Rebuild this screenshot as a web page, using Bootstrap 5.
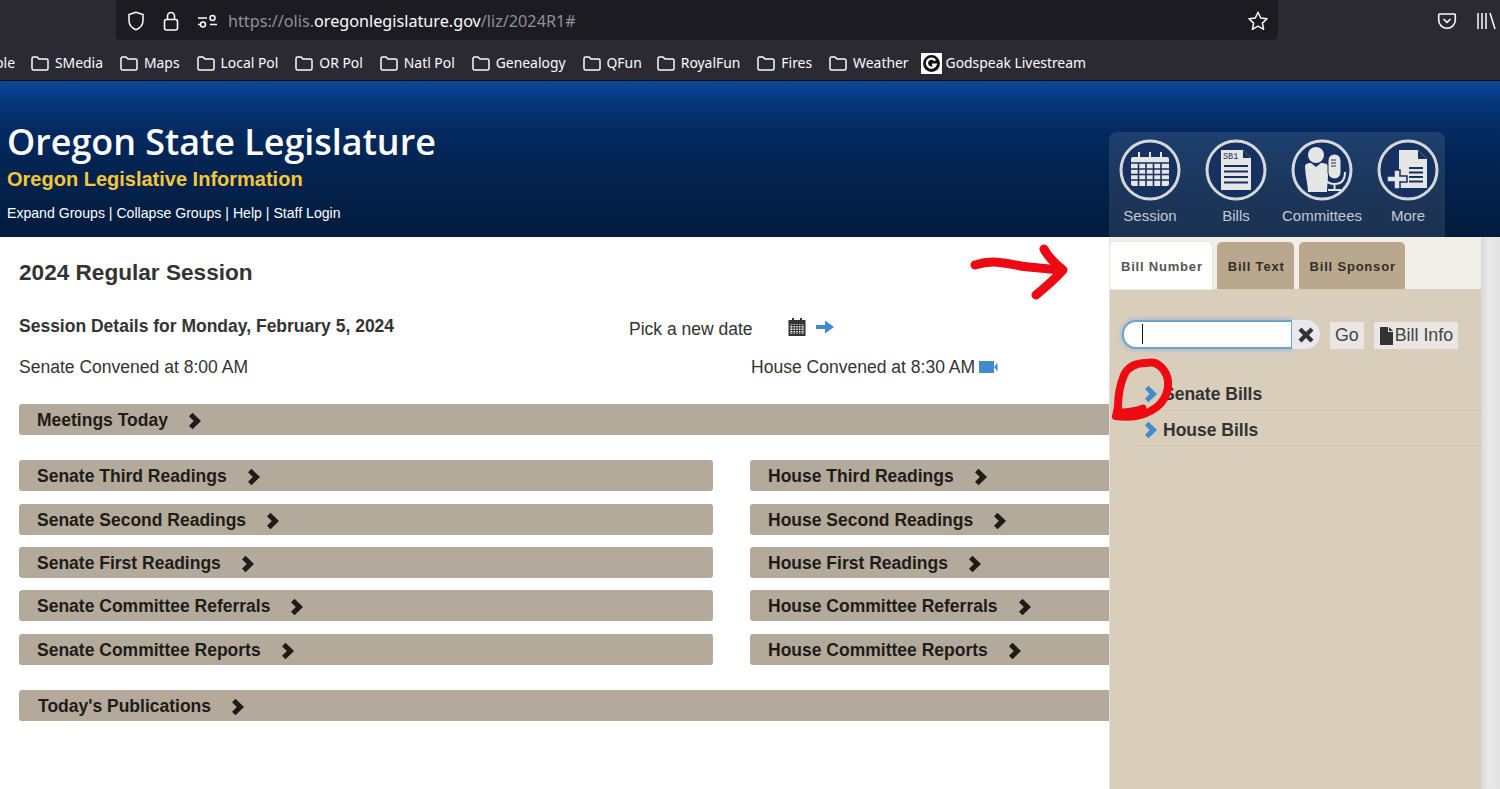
<!DOCTYPE html>
<html lang="en">
<head>
<meta charset="utf-8">
<title>Oregon State Legislature</title>
<link href="https://cdn.jsdelivr.net/npm/bootstrap@5.3.0/dist/css/bootstrap.min.css" rel="stylesheet">
<style>
html,body{height:789px;overflow:hidden;background:#fff}
body{font-family:"Liberation Sans",Arial,sans-serif;color:#333;position:relative}
.chrome{background:#2b2a33;height:81px;border-bottom:1px solid #0c0c0d;font-family:"Noto Sans",sans-serif;color:#fbfbfe;overflow:hidden}
.toolbar{height:42px;padding-left:116px}
.urlbar{width:1162px;height:40px;background:#1c1b22;border-radius:0 0 5px 5px;padding:2px 9px 0 9px}
.urlbar svg{flex:none}
.shield-gap{margin-left:12px}
.urltext{font-size:16.2px;color:#8f8f9d;margin-left:9px;white-space:nowrap}
.urltext b{font-weight:400;color:#fbfbfe}
.star{margin-left:auto}
.tools{margin-left:159px;gap:19px}
.marks{height:39px;padding-top:3px;font-size:13.9px;margin-left:-5px}
.mk{gap:5px;margin-right:16px;white-space:nowrap}
.mk.first-cut{margin-right:15px}
.mk.tight{margin-right:14px}
.mk.tighter{margin-right:12px}
.mk.fav{gap:4px}
.gfav{width:21px;height:21px;background:#fff;flex:none}
.site-head{height:156px;background:linear-gradient(#09499b 0,#06367a 22px,#042a62 48px,#03234f 90px,#021b3d 156px);padding:0 0 0 7px;position:relative;color:#fff}
.site-title{font-family:"Open Sans",sans-serif;font-weight:600;font-size:35.9px;line-height:44px;padding-top:39px;margin:0;box-sizing:content-box;height:44px}
.site-sub{font-weight:700;font-size:20px;color:#f4c63c;line-height:24px;margin-top:3px}
.site-links{font-size:14.1px;line-height:20px;margin-top:12px}
.site-links a{color:#fff;text-decoration:none}
.quick{position:absolute;left:1109px;top:51px;width:336px;height:105px;background:rgba(255,255,255,.1);border-radius:8px 8px 0 0;padding-top:7px}
.qitem{width:86px;flex:none;text-align:center;color:#c3c9d2;font-size:15px;line-height:18px;white-space:nowrap}
.qitem svg{display:block;margin:0 auto 6px}
.qrow{margin-left:-2px}
.work{height:552px;overflow:hidden}
.leftcol{width:1109px;flex:none;overflow:hidden;padding-left:19px}
.page-h{font-size:22.6px;font-weight:700;line-height:26px;margin:23px 0 0}
.detail{margin-top:27px;height:26px}
.detail-h{font-size:17.5px;font-weight:700;line-height:22px;width:610px;flex:none}
.picker{font-size:17.5px;white-space:nowrap;padding-top:3px}
.picker span{width:159px;flex:none;padding-top:4px}
.picker svg{margin-top:-2px}
.picker .arrow-x{margin-left:9px}
.conv{font-size:17.55px;line-height:24px;margin-top:16px}
.conv>div:first-child{width:732px;flex:none}
.bar-x{height:31px;background:#b3aa9c;border-radius:3px;font-size:17.5px;font-weight:700;color:#1f1c17;padding:2px 0 0 18px;white-space:nowrap;gap:20px}
.bar-x.wide{width:1200px}
.bar-x.pub{padding-left:19px}
.two{display:grid;grid-template-columns:694px 694px;grid-template-rows:44px 43px 43px 44px 31px;column-gap:37px;margin:25px 0}
.meet{margin-top:25px}
.sidebar{width:372px;flex:none;background:#d9cdbc;border-left:1px solid #e6e2da;position:relative}
.tabs-x{background:#f1eee8;height:52px;padding:5px 0 0 0;gap:5px;margin:0;flex-wrap:nowrap;border:0}
.tabs-x .nav-link{height:47px;border:0;border-radius:5px 5px 0 0;background:#b9a88e;color:#332e27;font-weight:700;font-size:13px;letter-spacing:.8px;line-height:49px;padding:0 9px 0 11px;margin:0}
.tabs-x .nav-link.active{background:#fff;color:#555;box-shadow:0 0 0 1px #ebe8e2}
.search-row{margin:31px 0 0 12px;height:29px}
.qfield{width:170px;height:29px;border:2px solid #6ea2cf;border-right-width:1px;border-radius:14px 0 0 14px;background:#fff;box-shadow:0 0 5px rgba(82,168,236,.6);padding:2px 0 0 18px;flex:none}
.caret-x{display:block;width:1px;height:20px;background:#111}
.qclear{width:28px;height:29px;background:#e8e8ee;border-radius:0 15px 15px 0;flex:none}
.btn-x{height:27px;padding:0 5px;line-height:27px;font-size:17.8px;color:#444;background:#e9e6e4;border:0;border-radius:0;margin:2px 0 0 10px;--bs-btn-hover-bg:#e9e6e4}
.tree{margin:26px 0 0 27px;background:transparent;border-radius:0}
.tree .list-group-item{background:transparent;border:0;border-bottom:1px dotted #cabfae;border-radius:0;height:35.5px;padding:4px 0 0 7px;font-size:17.5px;font-weight:700;color:#333;gap:5px}
.sbar{width:19px;flex:none;background:linear-gradient(90deg,#d9d9d9,#e8e8e8 40%,#e3e3e3)}
.ink{position:absolute;left:0;top:0;pointer-events:none}
</style>
</head>
<body>
<div class="chrome">
  <div class="toolbar d-flex">
    <div class="urlbar d-flex align-items-center">
      <svg width="22" height="22" viewBox="0 0 22 22" fill="none" stroke="#fbfbfe" stroke-width="1.5"><path d="M11 2.200 4 4.600v6c0 4.600 3.400 7.800 7 9.200 3.600-1.400 7-4.600 7-9.200v-6z"/></svg>
      <svg class="shield-gap" width="24" height="22" viewBox="0 0 24 22" fill="none" stroke="#fbfbfe" stroke-width="1.6"><rect x="5.500" y="9.500" width="13" height="10.500" rx="2"/><path d="M8.500 9.500V6a3.500 3.500 0 0 1 7 0v3.500"/></svg>
      <svg class="shield-gap" width="24" height="18" viewBox="0 0 24 18" fill="none" stroke="#fbfbfe" stroke-width="1.500"><path d="M3 6h9M3 12.500h2M15 12.500h7"/><circle cx="17.500" cy="6" r="2.500"/><circle cx="8" cy="12.500" r="2.500"/></svg>
      <span class="urltext">https://olis.<b>oregonlegislature.gov</b>/liz/2024R1#</span>
      <svg class="star" width="22" height="22" viewBox="0 0 22 22" fill="none" stroke="#fbfbfe" stroke-width="1.5" stroke-linejoin="round"><path d="m11 2.200 2.700 5.800 6.300.8-4.600 4.300 1.200 6.200L11 16.200l-5.600 3.100 1.200-6.200L2 8.800l6.300-.8z"/></svg>
    </div>
    <div class="tools d-flex align-items-center">
      <svg width="20" height="20" viewBox="0 0 20 20" fill="none" stroke="#fbfbfe" stroke-width="1.6"><path d="M2.500 3h15a.8.8 0 0 1 .8.8V9a8.300 8.300 0 0 1-16.600 0V3.800a.8.8 0 0 1 .8-.8z"/><path d="m6.500 8 3.500 3.400L13.500 8"/></svg>
      <svg width="20" height="22" viewBox="0 0 20 22" fill="none" stroke="#fbfbfe" stroke-width="1.500"><path d="M2 3v16M6 3v16M10 3v16M14 3l5 16"/></svg>
    </div>
  </div>
  <div class="marks d-flex align-items-center">
    <span class="mk first-cut">ple</span>
    <span class="mk d-flex align-items-center"><svg width="20" height="18" viewBox="0 0 20 18" fill="none" stroke="#fbfbfe" stroke-width="1.500"><path d="M2 4.500A1.500 1.500 0 0 1 3.500 3H7l2 2h7.500A1.500 1.500 0 0 1 18 6.500v8a1.500 1.500 0 0 1-1.500 1.500h-13A1.500 1.500 0 0 1 2 14.500z"/></svg>SMedia</span>
    <span class="mk d-flex align-items-center"><svg width="20" height="18" viewBox="0 0 20 18" fill="none" stroke="#fbfbfe" stroke-width="1.500"><path d="M2 4.500A1.500 1.500 0 0 1 3.500 3H7l2 2h7.500A1.500 1.500 0 0 1 18 6.500v8a1.500 1.500 0 0 1-1.500 1.500h-13A1.500 1.500 0 0 1 2 14.500z"/></svg>Maps</span>
    <span class="mk d-flex align-items-center"><svg width="20" height="18" viewBox="0 0 20 18" fill="none" stroke="#fbfbfe" stroke-width="1.500"><path d="M2 4.500A1.500 1.500 0 0 1 3.500 3H7l2 2h7.500A1.500 1.500 0 0 1 18 6.500v8a1.500 1.500 0 0 1-1.500 1.500h-13A1.500 1.500 0 0 1 2 14.500z"/></svg>Local Pol</span>
    <span class="mk d-flex align-items-center"><svg width="20" height="18" viewBox="0 0 20 18" fill="none" stroke="#fbfbfe" stroke-width="1.500"><path d="M2 4.500A1.500 1.500 0 0 1 3.500 3H7l2 2h7.500A1.500 1.500 0 0 1 18 6.500v8a1.500 1.500 0 0 1-1.500 1.500h-13A1.500 1.500 0 0 1 2 14.500z"/></svg>OR Pol</span>
    <span class="mk d-flex align-items-center"><svg width="20" height="18" viewBox="0 0 20 18" fill="none" stroke="#fbfbfe" stroke-width="1.500"><path d="M2 4.500A1.500 1.500 0 0 1 3.500 3H7l2 2h7.500A1.500 1.500 0 0 1 18 6.500v8a1.500 1.500 0 0 1-1.500 1.500h-13A1.500 1.500 0 0 1 2 14.500z"/></svg>Natl Pol</span>
    <span class="mk d-flex align-items-center"><svg width="20" height="18" viewBox="0 0 20 18" fill="none" stroke="#fbfbfe" stroke-width="1.500"><path d="M2 4.500A1.500 1.500 0 0 1 3.500 3H7l2 2h7.500A1.500 1.500 0 0 1 18 6.500v8a1.500 1.500 0 0 1-1.500 1.500h-13A1.500 1.500 0 0 1 2 14.500z"/></svg>Genealogy</span>
    <span class="mk tight d-flex align-items-center"><svg width="20" height="18" viewBox="0 0 20 18" fill="none" stroke="#fbfbfe" stroke-width="1.500"><path d="M2 4.500A1.500 1.500 0 0 1 3.500 3H7l2 2h7.500A1.500 1.500 0 0 1 18 6.500v8a1.500 1.500 0 0 1-1.500 1.500h-13A1.500 1.500 0 0 1 2 14.500z"/></svg>QFun</span>
    <span class="mk d-flex align-items-center"><svg width="20" height="18" viewBox="0 0 20 18" fill="none" stroke="#fbfbfe" stroke-width="1.500"><path d="M2 4.500A1.500 1.500 0 0 1 3.500 3H7l2 2h7.500A1.500 1.500 0 0 1 18 6.500v8a1.500 1.500 0 0 1-1.500 1.500h-13A1.500 1.500 0 0 1 2 14.500z"/></svg>RoyalFun</span>
    <span class="mk d-flex align-items-center"><svg width="20" height="18" viewBox="0 0 20 18" fill="none" stroke="#fbfbfe" stroke-width="1.500"><path d="M2 4.500A1.500 1.500 0 0 1 3.500 3H7l2 2h7.500A1.500 1.500 0 0 1 18 6.500v8a1.500 1.500 0 0 1-1.500 1.500h-13A1.500 1.500 0 0 1 2 14.500z"/></svg>Fires</span>
    <span class="mk tighter d-flex align-items-center"><svg width="20" height="18" viewBox="0 0 20 18" fill="none" stroke="#fbfbfe" stroke-width="1.500"><path d="M2 4.500A1.500 1.500 0 0 1 3.500 3H7l2 2h7.500A1.500 1.500 0 0 1 18 6.500v8a1.500 1.500 0 0 1-1.500 1.500h-13A1.500 1.500 0 0 1 2 14.500z"/></svg>Weather</span>
    <span class="mk fav d-flex align-items-center"><svg class="gfav" viewBox="0 0 20 20"><circle cx="10" cy="10" r="8" fill="#111"/><path d="M13.500 7.200A4.300 4.300 0 1 0 14 11h-3.500" fill="none" stroke="#fff" stroke-width="2.200"/></svg>Godspeak Livestream</span>
  </div>
</div>

<header class="site-head">
  <h1 class="site-title">Oregon State Legislature</h1>
  <div class="site-sub">Oregon Legislative Information</div>
  <div class="site-links"><a href="#">Expand Groups</a> | <a href="#">Collapse Groups</a> | <a href="#">Help</a> | <a href="#">Staff Login</a></div>
  <nav class="quick">
    <div class="qrow d-flex">
      <div class="qitem"><svg width="62" height="62" viewBox="0 0 62 62"><circle cx="31" cy="31" r="29" fill="#16315f" stroke="#d5d7da" stroke-width="3"/><rect x="12" y="18" width="38" height="29" rx="2" fill="#e6e6e6"/><g stroke="#16315f" stroke-width="1.600"><path d="M12 24h38M12 30h38M12 35.500h38M12 41h38M19.500 24v23M27 24v23M34.500 24v23M42 24v23"/></g><g stroke="#e6e6e6" stroke-width="2"><path d="M20 13v7M31 13v7M42 13v7"/></g></svg>Session</div>
      <div class="qitem"><svg width="62" height="62" viewBox="0 0 62 62"><circle cx="31" cy="31" r="29" fill="#16315f" stroke="#d5d7da" stroke-width="3"/><path d="M16 11h22l8 8v32H16z" fill="#e6e6e6"/><path d="M38 11v8h8z" fill="#16315f"/><text x="18" y="20" font-size="8.500" font-family="Liberation Mono,monospace" fill="#16315f">SB1</text><path d="M19 27h24M19 32.500h24M19 38h24M19 43.500h24" stroke="#16315f" stroke-width="2"/></svg>Bills</div>
      <div class="qitem"><svg width="62" height="62" viewBox="0 0 62 62"><circle cx="31" cy="31" r="29" fill="#16315f" stroke="#d5d7da" stroke-width="3"/><circle cx="25" cy="16" r="8" fill="#e6e6e6"/><path d="M14 28c0-3 2-4 6-4l5 4 5-4c4 0 7 1 7 3v8c0 7-1 12-1 18H17c0-8-3-15-3-29z" fill="#e6e6e6"/><rect x="37" y="15" width="13" height="25" rx="6.500" fill="#e6e6e6" stroke="#16315f"/><path d="M40 21h5M40 24h5M40 27h5" stroke="#16315f"/><path d="M33 33c0 9 5 12 10.500 12S54 42 54 33M43.500 45v5M37 51h13" fill="none" stroke="#e6e6e6" stroke-width="2"/></svg>Committees</div>
      <div class="qitem"><svg width="62" height="62" viewBox="0 0 62 62"><circle cx="31" cy="31" r="29" fill="#16315f" stroke="#d5d7da" stroke-width="3"/><path d="M22 11h19l9 9v29H22z" fill="#e6e6e6"/><path d="M41 11v9h9z" fill="#16315f"/><path d="M10 37h7v-6h6v6h7v6h-7v7h-6v-7h-7z" fill="#e6e6e6" stroke="#16315f" stroke-width="1.500"/><path d="M32 29h14M32 33.500h14M32 38h14M32 42.500h14" stroke="#16315f" stroke-width="2"/></svg>More</div>
    </div>
  </nav>
</header>

<main class="work d-flex">
  <div class="leftcol">
    <h2 class="page-h">2024 Regular Session</h2>
    <div class="detail d-flex align-items-center">
      <div class="detail-h">Session Details for Monday, February 5, 2024</div>
      <div class="picker d-flex align-items-center"><span>Pick a new date</span>
        <svg width="18" height="19" viewBox="0 0 18 19"><path d="M.5 3h3.500V1h2v2h6V1h2v2h3.500v16H.5z" fill="#333"/><path d="M2.500 7.500h13v9.500h-13z" fill="#fff"/><path d="M2.500 8.500h13M2.500 11h13M2.500 13.500h13M2.500 16h13M5 7.500V17M7.700 7.500V17M10.300 7.500V17M13 7.500V17" stroke="#333" stroke-width="1.200"/></svg>
        <svg class="arrow-x" width="20" height="18" viewBox="0 0 20 18"><path d="M1 7h9V2.500L19 9l-9 6.500V11H1z" fill="#428bca"/></svg>
      </div>
    </div>
    <div class="conv d-flex">
      <div>Senate Convened at 8:00 AM</div>
      <div class="d-flex align-items-center">House Convened at 8:30 AM<svg class="ms-1" width="19" height="14" viewBox="0 0 19 14"><rect x="0" y="1" width="15" height="12" fill="#428bca"/><path d="M15 7l3.500-4.500v9z" fill="#428bca"/></svg></div>
    </div>
    <div class="bar-x wide meet d-flex align-items-center">Meetings Today<svg class="chev" width="14" height="18" viewBox="0 0 14 18"><path d="M4.500.8 13 9l-8.500 8.200L1 13.700 5.800 9 1 4.300z" fill="#1f1c17"/></svg></div>
    <div class="two">
      <div class="bar-x d-flex align-items-center">Senate Third Readings<svg width="14" height="18" viewBox="0 0 14 18"><path d="M4.500.8 13 9l-8.500 8.200L1 13.700 5.800 9 1 4.300z" fill="#1f1c17"/></svg></div>
      <div class="bar-x d-flex align-items-center">House Third Readings<svg width="14" height="18" viewBox="0 0 14 18"><path d="M4.500.8 13 9l-8.500 8.200L1 13.700 5.800 9 1 4.300z" fill="#1f1c17"/></svg></div>
      <div class="bar-x d-flex align-items-center">Senate Second Readings<svg width="14" height="18" viewBox="0 0 14 18"><path d="M4.500.8 13 9l-8.500 8.200L1 13.700 5.800 9 1 4.300z" fill="#1f1c17"/></svg></div>
      <div class="bar-x d-flex align-items-center">House Second Readings<svg width="14" height="18" viewBox="0 0 14 18"><path d="M4.500.8 13 9l-8.500 8.200L1 13.700 5.800 9 1 4.300z" fill="#1f1c17"/></svg></div>
      <div class="bar-x d-flex align-items-center">Senate First Readings<svg width="14" height="18" viewBox="0 0 14 18"><path d="M4.500.8 13 9l-8.500 8.200L1 13.700 5.800 9 1 4.300z" fill="#1f1c17"/></svg></div>
      <div class="bar-x d-flex align-items-center">House First Readings<svg width="14" height="18" viewBox="0 0 14 18"><path d="M4.500.8 13 9l-8.500 8.200L1 13.700 5.800 9 1 4.300z" fill="#1f1c17"/></svg></div>
      <div class="bar-x d-flex align-items-center">Senate Committee Referrals<svg width="14" height="18" viewBox="0 0 14 18"><path d="M4.500.8 13 9l-8.500 8.200L1 13.700 5.800 9 1 4.300z" fill="#1f1c17"/></svg></div>
      <div class="bar-x d-flex align-items-center">House Committee Referrals<svg width="14" height="18" viewBox="0 0 14 18"><path d="M4.500.8 13 9l-8.500 8.200L1 13.700 5.800 9 1 4.300z" fill="#1f1c17"/></svg></div>
      <div class="bar-x d-flex align-items-center">Senate Committee Reports<svg width="14" height="18" viewBox="0 0 14 18"><path d="M4.500.8 13 9l-8.500 8.200L1 13.700 5.800 9 1 4.300z" fill="#1f1c17"/></svg></div>
      <div class="bar-x d-flex align-items-center">House Committee Reports<svg width="14" height="18" viewBox="0 0 14 18"><path d="M4.500.8 13 9l-8.500 8.200L1 13.700 5.800 9 1 4.300z" fill="#1f1c17"/></svg></div>
    </div>
    <div class="bar-x wide pub d-flex align-items-center">Today's Publications<svg width="14" height="18" viewBox="0 0 14 18"><path d="M4.500.8 13 9l-8.500 8.200L1 13.700 5.800 9 1 4.300z" fill="#1f1c17"/></svg></div>
  </div>
  <aside class="sidebar">
    <ul class="nav nav-tabs tabs-x">
      <li class="nav-item"><a class="nav-link active" href="#">Bill Number</a></li>
      <li class="nav-item"><a class="nav-link" href="#">Bill Text</a></li>
      <li class="nav-item"><a class="nav-link" href="#">Bill Sponsor</a></li>
    </ul>
    <div class="search-row d-flex align-items-center">
      <div class="qfield"><span class="caret-x"></span></div>
      <div class="qclear d-flex align-items-center justify-content-center"><svg width="16" height="16" viewBox="0 0 16 16"><path d="M3.500 .5 8 5 12.500 .5 15.500 3.500 11 8 15.500 12.500 12.500 15.500 8 11 3.500 15.500 .5 12.500 5 8 .5 3.500z" fill="#333"/></svg></div>
      <button class="btn btn-x" type="button">Go</button>
      <button class="btn btn-x d-flex align-items-center" type="button"><svg width="16" height="18" viewBox="0 0 16 18"><path d="M1 0h8v5h5v13H1zM10 0l4 4h-4z" fill="#333"/></svg>Bill Info</button>
    </div>
    <div class="list-group tree">
      <div class="list-group-item d-flex align-items-center"><svg width="14" height="18" viewBox="0 0 14 18"><path d="M4.500.8 13 9l-8.500 8.200L1 13.700 5.800 9 1 4.300z" fill="#428bca"/></svg>Senate Bills</div>
      <div class="list-group-item d-flex align-items-center"><svg width="14" height="18" viewBox="0 0 14 18"><path d="M4.500.8 13 9l-8.500 8.200L1 13.700 5.800 9 1 4.300z" fill="#428bca"/></svg>House Bills</div>
    </div>
  </aside>
  <div class="sbar"></div>
</main>

<svg class="ink" width="1500" height="789" viewBox="0 0 1500 789" fill="none" stroke="#ee0a12" stroke-linecap="round" stroke-linejoin="round">
  <path d="M975 265c6-2 12-3 18-3 12 0 24 4 36 5 10 1 20 2 31 3" stroke-width="9"/>
  <path d="M1044 249c3 6 8 12 19 21-8 9-16 16-27 25" stroke-width="9"/>
  <path d="M1146 363c-10 0-18 4-22 12-4 10-6 22-6 32l-2 9c7 1 14 1 20 0 10-2 20-7 25-13 5-6 8-14 7-22-1-8-6-15-13-18-4-1-7 0-9 0" stroke-width="8"/>
  <path d="M1121 412c6 0 14-1 22-4" stroke-width="7"/>
</svg>
</body>
</html>
